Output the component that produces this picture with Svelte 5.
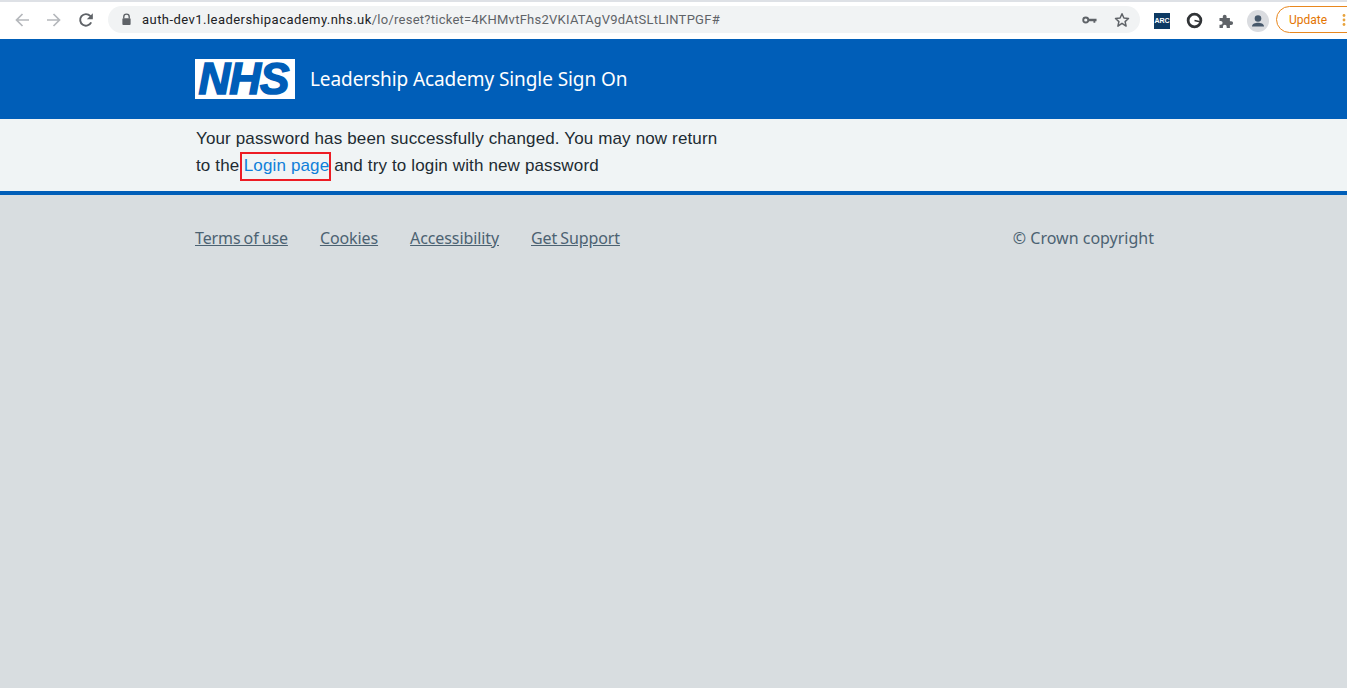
<script>
  const links = ['Terms of use', 'Cookies', 'Accessibility', 'Get Support'];
</script>

<div class="page">
  <div class="chrome">
    <div class="strip"></div>
    <div class="toolbar">
      <div class="nav">
        <svg class="ic" viewBox="0 0 16 16"><path d="M15 8H2.500M8.500 2 2.500 8l6 6" fill="none" stroke="#b5b8bc" stroke-width="1.7"/></svg>
        <svg class="ic" viewBox="0 0 16 16"><path d="M1 8h12.500M7.500 2l6 6-6 6" fill="none" stroke="#b5b8bc" stroke-width="1.7"/></svg>
        <svg class="ic" viewBox="0 0 16 16"><path d="M13.200 10.400A5.800 5.800 0 1 1 12.200 3.900L14 5.700" fill="none" stroke="#5f6368" stroke-width="1.9"/><path d="M14.800 1.200v6h-6z" fill="#5f6368"/></svg>
      </div>
      <div class="omnibox">
        <svg class="lock" viewBox="0 0 12 14"><path d="M3 6V4.200a3 3 0 0 1 6 0V6" fill="none" stroke="#5f6368" stroke-width="1.5"/><rect x="1.500" y="5.500" width="9" height="7.500" rx="1" fill="#5f6368"/></svg>
        <div class="url"><span class="host">auth-dev1.leadershipacademy.nhs.uk</span>/lo/reset?ticket=4KHMvtFhs2VKIATAgV9dAtSLtLINTPGF#</div>
        <svg class="key" viewBox="0 0 16 10"><circle cx="4" cy="5" r="2.700" fill="none" stroke="#5f6368" stroke-width="2"/><path d="M6.500 3.700H15.500V6.300H14.200V8H12.200V6.300H6.500z" fill="#5f6368"/></svg>
        <svg class="star" viewBox="0 0 16 16"><path d="M8 1.800l1.900 4.200 4.600.5-3.400 3.100 1 4.500L8 11.300l-4.100 2.800 1-4.500L1.500 6.500l4.600-.5z" fill="none" stroke="#5f6368" stroke-width="1.5" stroke-linejoin="round"/></svg>
      </div>
      <div class="exts">
        <div class="slot"><div class="arc">ARC</div></div>
        <div class="slot"><svg class="ring" viewBox="0 0 16 16"><circle cx="8" cy="8" r="6" fill="none" stroke="#303336" stroke-width="2.600"/><path d="M8 8l5 1.200" stroke="#303336" stroke-width="1.500"/></svg></div>
        <div class="slot"><svg class="puzzle" viewBox="0 0 16 16"><path d="M1.500 5h3.300V3.600a1.900 1.900 0 0 1 3.800 0V5h3.300v3.200h1.300a1.900 1.900 0 0 1 0 3.800h-1.300v3H8.700v-1.300a1.900 1.900 0 0 0-3.800 0V15H1.500v-3.300h1.200a1.900 1.900 0 0 0 0-3.800H1.500z" fill="#5f6368"/></svg></div>
        <div class="slot"><div class="avatar"><svg viewBox="0 0 22 22"><circle cx="11" cy="8.500" r="3.300" fill="#46586b"/><path d="M5 16.500c0-2.700 3.500-3.700 6-3.700s6 1 6 3.700z" fill="#46586b"/></svg></div></div>
      </div>
      <div class="update"><span>Update</span><svg class="dots" viewBox="0 0 4 14"><circle cx="2" cy="2.500" r="1.400"/><circle cx="2" cy="7" r="1.400"/><circle cx="2" cy="11.500" r="1.400"/></svg></div>
    </div>
  </div>

  <header class="head">
    <div class="wrap head-row">
      <div class="logo"><span>NHS</span></div>
      <div class="title">Leadership Academy Single Sign On</div>
    </div>
  </header>

  <main class="panel">
    <div class="wrap">
      <p>Your password has been successfully changed. You may now return<br />to the <a href="#login" class="login">Login page</a> and try to login with new password</p>
    </div>
  </main>

  <footer class="foot">
    <div class="wrap foot-row">
      <nav class="links">
        {#each links as l}<a href="#{l}">{l}</a>{/each}
      </nav>
      <div class="copy">© Crown copyright</div>
    </div>
  </footer>
</div>

<style>
  :global(body) { margin: 0; background: #d8dde0; overflow: hidden; }
  .page { height: 688px; display: flex; flex-direction: column; background: #d8dde0; overflow: hidden; }
  .wrap { width: 960px; margin-left: 195px; }

  .chrome { height: 39px; background: #fff; flex: none; }
  .strip { height: 2px; background: #dee1e6; }
  .toolbar { height: 37px; display: flex; align-items: flex-start; white-space: nowrap; width: 1400px; }
  .nav { display: flex; gap: 16px; width: 108px; padding: 10px 0 0 14px; box-sizing: border-box; flex: none; }
  .ic { width: 16px; height: 16px; display: block; }
  .omnibox { width: 1032px; height: 27px; margin-top: 4px; background: #f1f3f4; border-radius: 14px; display: flex; align-items: center; flex: none; font: 13px/27px "Roboto", sans-serif; color: #5f6368; }
  .lock { width: 11px; height: 13px; margin-left: 13px; flex: none; }
  .url { margin-left: 10px; flex: 1; letter-spacing: 0.257px; }
  .host { color: #202124; letter-spacing: 0.455px; }
  .key { width: 15px; height: 10px; margin-right: 17px; }
  .star { width: 16px; height: 16px; margin-right: 10px; }
  .exts { display: flex; margin-left: 6px; flex: none; }
  .slot { width: 32px; height: 27px; margin-top: 5px; display: flex; align-items: center; justify-content: center; }
  .arc { width: 16px; height: 16px; background: #0d3a63; color: #fff; font: bold 7px/16px "Liberation Sans", sans-serif; text-align: center; }
  .ring { width: 17px; height: 17px; }
  .puzzle { width: 16px; height: 16px; }
  .avatar { width: 22px; height: 22px; border-radius: 50%; background: #dadce0; }
  .avatar svg { width: 22px; height: 22px; display: block; }
  .update { margin: 4px 0 0 2px; width: 100px; height: 27px; box-sizing: border-box; border: 1px solid #e8871e; border-radius: 14px; display: flex; align-items: center; padding-left: 12px; font: 12px "Roboto", sans-serif; color: #e37400; flex: none; }
  .dots { width: 4px; height: 14px; margin-left: 15px; fill: #e8a33d; }

  .head { background: #005eb8; height: 80px; flex: none; }
  .head-row { height: 80px; display: flex; align-items: center; }
  .logo { width: 100px; height: 40px; background: #fff; display: flex; align-items: center; justify-content: center; flex: none; }
  .logo span { font: italic bold 44px/40px "Liberation Sans", sans-serif; color: #005eb8; letter-spacing: -1px; -webkit-text-stroke: 1.6px #005eb8; display: block; margin-left: -3px; }
  .title { margin-left: 15px; color: #fff; font: 19px "Noto Sans", sans-serif; letter-spacing: -0.09px; }

  .panel { background: #f0f4f5; height: 72px; border-bottom: 4px solid #005eb8; flex: none; }
  .panel p { margin: 6px 0 0 1px; font: 17px/27px "Liberation Sans", sans-serif; color: #212b32; letter-spacing: 0.14px; }
  .login { color: #0f7fd9; text-decoration: none; outline: 2px solid #ed1c24; outline-offset: 0; padding: 2px 0 4px 2px; margin-left: -2.5px; }

  .foot-row { display: flex; justify-content: space-between; padding: 32px 1px 0 0; box-sizing: border-box; font: 16px/22px "Noto Sans", sans-serif; color: #4c6272; }
  .links { display: flex; gap: 32px; letter-spacing: -0.1px; word-spacing: -1px; }
  .links a { color: #4c6272; text-decoration: underline; }
</style>
